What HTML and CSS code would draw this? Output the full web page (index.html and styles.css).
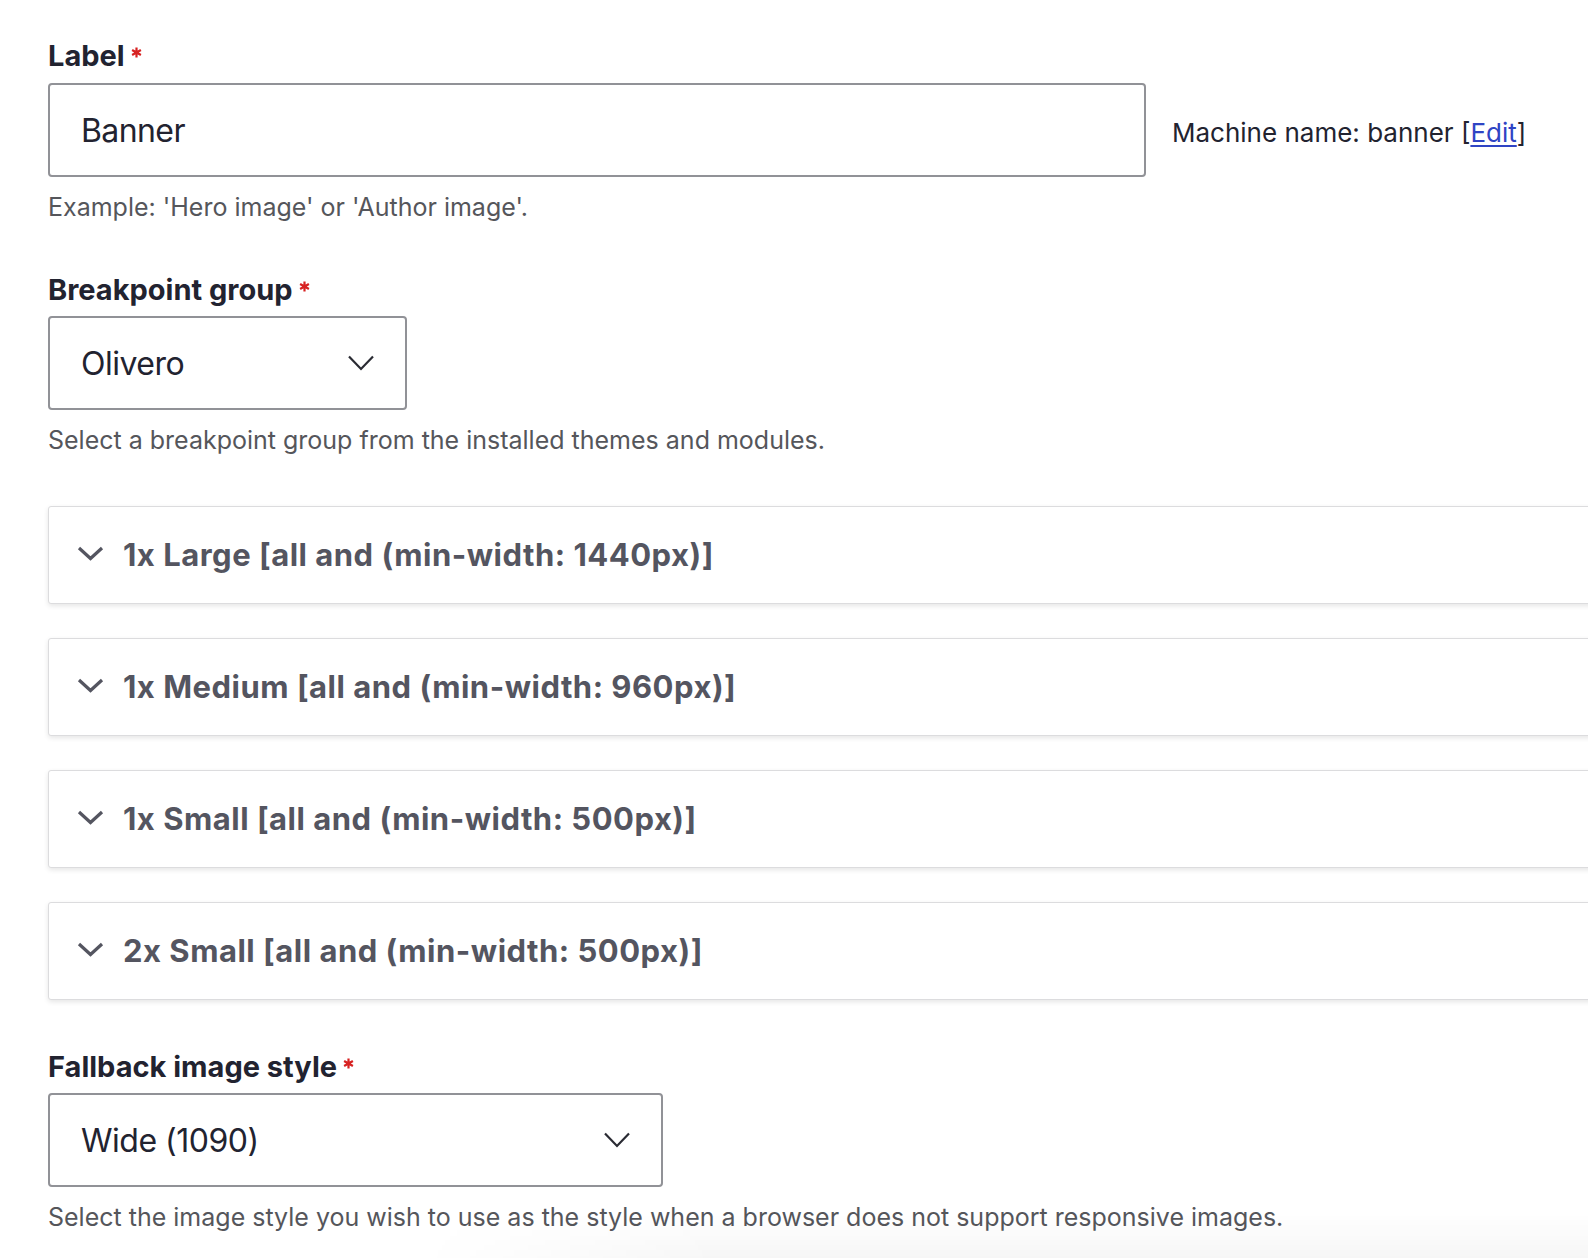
FILE: index.html
```html
<!DOCTYPE html>
<html lang="en">
<head>
<meta charset="utf-8">
<title>Responsive image style</title>
<link rel="stylesheet" href="styles.css">
</head>
<body>
<form class="form">
  <div class="field">
    <div class="form-label">Label<svg class="req" viewBox="0 0 12 12" aria-hidden="true"><path d="M6 0.5v11M1.2 3.2l9.6 5.6M10.8 3.2l-9.6 5.6"/></svg></div>
    <div class="row">
      <div class="text-input">Banner</div>
      <span class="machine">Machine name: banner [<a href="#" class="link">Edit</a>]</span>
    </div>
    <div class="desc">Example: 'Hero image' or 'Author image'.</div>
  </div>

  <div class="field">
    <div class="form-label">Breakpoint group<svg class="req" viewBox="0 0 12 12" aria-hidden="true"><path d="M6 0.5v11M1.2 3.2l9.6 5.6M10.8 3.2l-9.6 5.6"/></svg></div>
    <div class="select select--group">
      <span>Olivero</span>
      <svg class="select-arrow" viewBox="0 0 26 16" aria-hidden="true"><polyline points="1,1.5 13,14 25,1.5"/></svg>
    </div>
    <div class="desc">Select a breakpoint group from the installed themes and modules.</div>
  </div>

  <div class="details-list">
    <div class="details">
      <svg class="summary-arrow" viewBox="0 0 27 15" aria-hidden="true"><polyline points="2,2 13.5,12.5 25,2"/></svg>
      <span class="summary">1x Large [all and (min-width: 1440px)]</span>
    </div>
    <div class="details">
      <svg class="summary-arrow" viewBox="0 0 27 15" aria-hidden="true"><polyline points="2,2 13.5,12.5 25,2"/></svg>
      <span class="summary">1x Medium [all and (min-width: 960px)]</span>
    </div>
    <div class="details">
      <svg class="summary-arrow" viewBox="0 0 27 15" aria-hidden="true"><polyline points="2,2 13.5,12.5 25,2"/></svg>
      <span class="summary">1x Small [all and (min-width: 500px)]</span>
    </div>
    <div class="details">
      <svg class="summary-arrow" viewBox="0 0 27 15" aria-hidden="true"><polyline points="2,2 13.5,12.5 25,2"/></svg>
      <span class="summary">2x Small [all and (min-width: 500px)]</span>
    </div>
  </div>

  <div class="field field--last">
    <div class="form-label">Fallback image style<svg class="req" viewBox="0 0 12 12" aria-hidden="true"><path d="M6 0.5v11M1.2 3.2l9.6 5.6M10.8 3.2l-9.6 5.6"/></svg></div>
    <div class="select select--fallback">
      <span>Wide (1090)</span>
      <svg class="select-arrow" viewBox="0 0 26 16" aria-hidden="true"><polyline points="1,1.5 13,14 25,1.5"/></svg>
    </div>
    <div class="desc">Select the image style you wish to use as the style when a browser does not support responsive images.</div>
  </div>
</form>
<div class="bottom-shade"></div>
</body>
</html>
```

FILE: styles.css
```css
html, body {
  margin: 0;
  padding: 0;
  background: #ffffff;
  overflow: hidden;
}

body {
  font-family: Inter, "Noto Sans", "Liberation Sans", sans-serif;
  color: #222330;
  width: 1588px;
  height: 1258px;
  position: relative;
}

.form {
  padding: 38px 0 0 48px;
  display: flex;
  flex-direction: column;
}

.field {
  display: flex;
  flex-direction: column;
  margin-bottom: 49px;
}

.form-label {
  font-size: 29px;
  line-height: 36px;
  font-weight: 700;
  letter-spacing: 0;
  color: #222330;
  display: flex;
  align-items: flex-start;
}

.req {
  width: 11px;
  height: 11px;
  margin: 9px 0 0 6px;
  stroke: #d72222;
  stroke-width: 2.4;
  fill: none;
}

.row {
  display: flex;
  align-items: center;
  gap: 26px;
  margin-top: 9px;
}

.text-input {
  box-sizing: border-box;
  width: 1098px;
  height: 94px;
  border: 2px solid #919297;
  border-radius: 4px;
  padding: 0 31px;
  display: flex;
  align-items: center;
  font-size: 32px;
  letter-spacing: -0.6px;
  color: #222330;
}

.machine {
  font-size: 26px;
  letter-spacing: 0;
  color: #222330;
  padding-top: 4px;
}

.link {
  color: #2f44c4;
  text-decoration: underline;
  text-decoration-thickness: 2px;
  text-underline-offset: 3px;
}

.desc {
  margin-top: 14px;
  font-size: 25px;
  line-height: 32px;
  color: #55565b;
  letter-spacing: 0;
}

.select {
  box-sizing: border-box;
  height: 94px;
  margin-top: 8px;
  border: 2px solid #919297;
  border-radius: 4px;
  padding: 0 31px 0 31px;
  display: flex;
  align-items: center;
  justify-content: space-between;
  font-size: 32px;
  letter-spacing: -0.5px;
  color: #222330;
}

.select--group {
  width: 359px;
}

.select--fallback {
  width: 615px;
}

.select-arrow {
  width: 26px;
  height: 16px;
  fill: none;
  stroke: #2a2b33;
  stroke-width: 2.2;
}

.details-list {
  display: flex;
  flex-direction: column;
  gap: 34px;
  margin-top: 1px;
  margin-bottom: 49px;
  margin-right: -60px;
}

.details {
  box-sizing: border-box;
  height: 98px;
  background: #ffffff;
  border: 1.5px solid #dcdcde;
  border-radius: 3px;
  box-shadow: 0 2px 5px rgba(0, 0, 0, 0.1);
  display: flex;
  align-items: center;
  padding-left: 28px;
  gap: 19px;
}

.summary-arrow {
  width: 27px;
  height: 15px;
  fill: none;
  stroke: #545560;
  stroke-width: 3.2;
  margin-top: -3px;
}

.summary {
  font-size: 31px;
  line-height: 38px;
  font-weight: 700;
  color: #545560;
  letter-spacing: 0.5px;
}

.field--last {
  margin-bottom: 0;
}

.bottom-shade {
  position: absolute;
  left: 420px;
  right: 0;
  bottom: 0;
  height: 45px;
  background: linear-gradient(to bottom, rgba(0, 0, 0, 0), rgba(0, 0, 0, 0.035));
  -webkit-mask-image: linear-gradient(to right, transparent, #000 300px);
  mask-image: linear-gradient(to right, transparent, #000 300px);
  pointer-events: none;
}
```
